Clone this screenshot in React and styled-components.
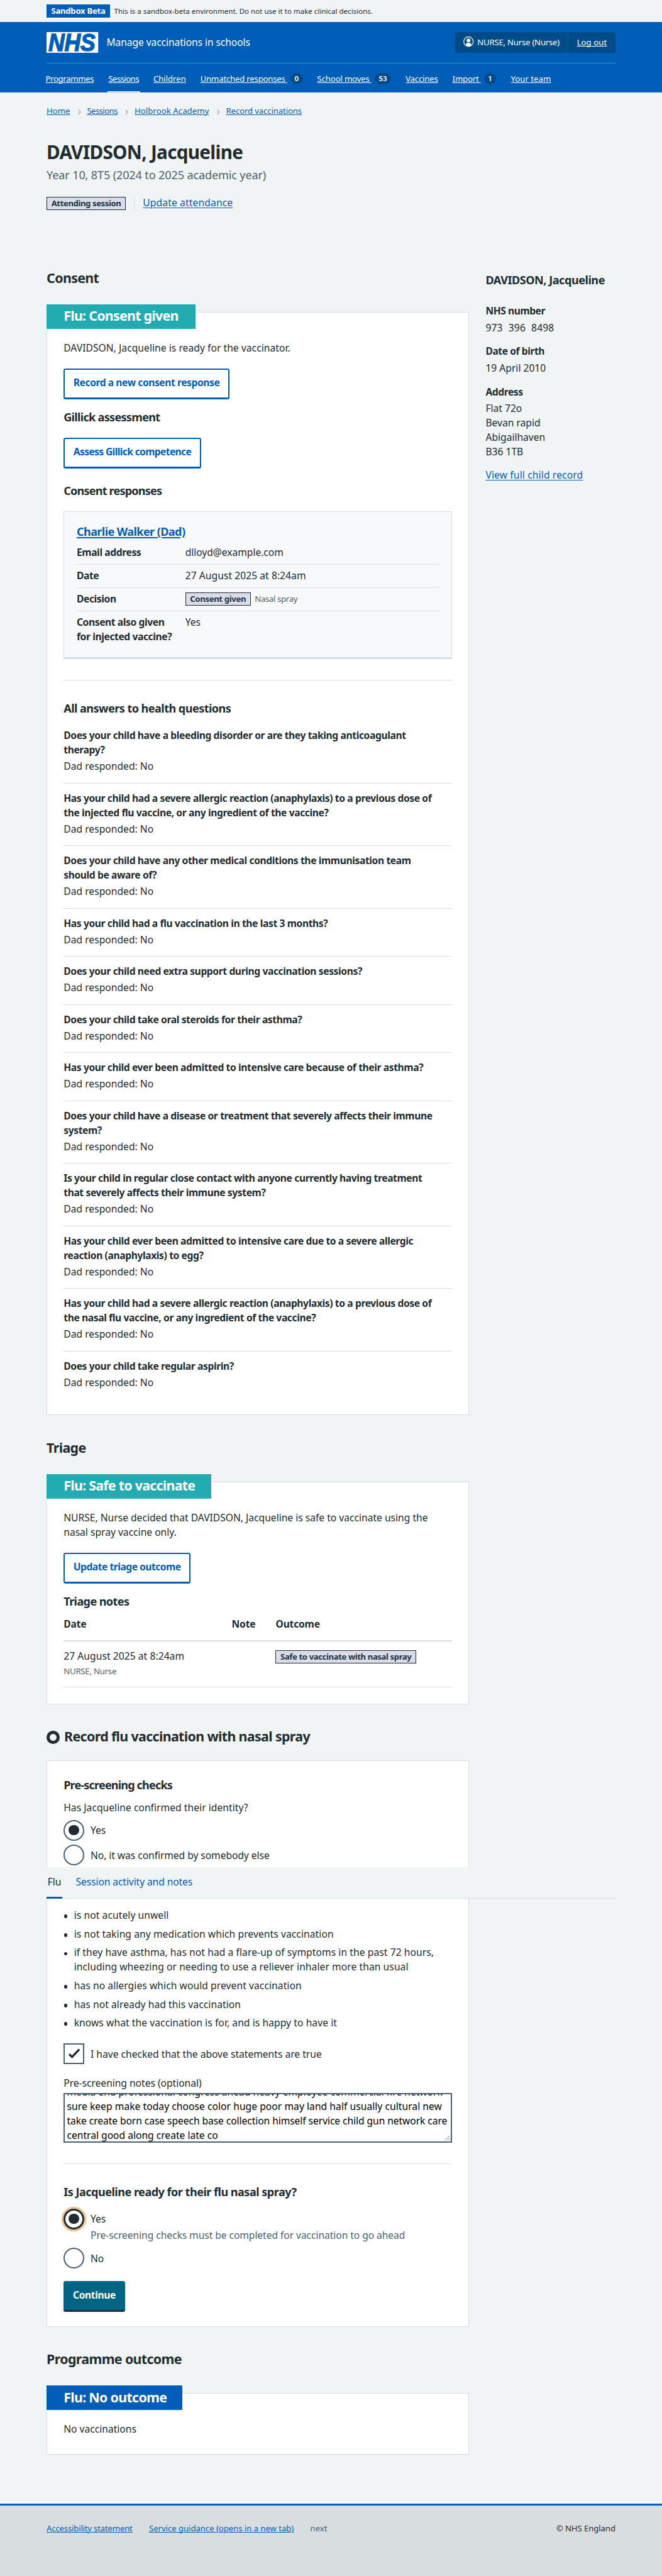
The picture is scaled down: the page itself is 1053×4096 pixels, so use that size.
import React from "react";
import styled, { createGlobalStyle, css } from "styled-components";

const C = {
  text: "#212b32",
  grey: "#4c6272",
  blue: "#005eb8",
  deep: "#004b88",
  rule: "#d8dde0",
  page: "#f0f4f5",
  teal: "#22acb1",
};

/* 1rem is ten design pixels */
const Global = createGlobalStyle`
  html { font-size: 8.2257px; background: ${C.page}; }
  body { margin: 0; color: ${C.text}; font-family: "Noto Sans", "Open Sans", sans-serif; font-size: 1.9rem; line-height: 2.8rem; }
  *, *::before, *::after { box-sizing: border-box; }
  h1, h2, h3, p, ul, dl, dt, dd { margin: 0; padding: 0; }
`;

const mt = css`margin-top: ${(p) => (p.$mt || 0) / 10}rem;`;
const track = css`letter-spacing: ${(p) => (p.$t || 0) / 1000}em;`;
/* bold text is set a little tighter than regular */
const bold = css`font-weight: 700; letter-spacing: ${(p) => ((p.$t || 0) - 12) / 1000}em;`;

const Page = styled.div`height: 4096px; overflow: hidden; white-space: nowrap; display: flex; flex-direction: column;`;
const Wrap = styled.div`width: 110rem; margin: 0 auto;`;

const underline = css`
  text-decoration: underline;
  text-decoration-thickness: 1px;
  text-underline-offset: 0.1em;
`;
const link = css`color: ${C.blue}; ${underline}`;
const Link = styled.a`${link} ${track}`;

/* environment banner */
const Banner = styled(Wrap)`height: 4.2rem; display: flex; align-items: center; gap: 0.8rem; flex: none;`;
const EnvTag = styled.strong`
  background: ${C.blue}; color: #fff; font-size: 1.6rem; line-height: 2.6rem; height: 2.6rem; padding: 0 0.9rem; ${bold}
`;
const EnvText = styled.span`font-size: 1.4rem; ${track}`;

/* header */
const Header = styled.header`background: ${C.blue}; height: 13.7rem; flex: none; color: #fff;`;
const HeaderTop = styled.div`display: flex; align-items: center; height: 8rem;`;
const Logo = styled.svg`width: 10rem; height: 4rem; display: block; overflow: visible;`;
const Service = styled.span`margin-left: 1.6rem; ${track}`;
const Account = styled.div`
  margin-left: auto; height: 4rem; width: 31rem; background: ${C.deep}; border-radius: 0.4rem; display: flex; font-size: 1.6rem; line-height: 2.4rem;
`;
const AccountUser = styled.div`display: flex; align-items: center; padding-left: 1.6rem; gap: 0.7rem; width: 21.9rem; border-right: 1px solid ${C.blue}; ${track}`;
const UserIcon = styled.svg`width: 2rem; height: 2rem; margin-top: -0.2rem;`;
const LogOut = styled.a`flex: 1; text-align: center; color: #fff; line-height: 4.1rem; ${underline} ${track}`;
const Nav = styled.nav`border-top: 1px solid #209dae; height: 5.7rem; display: flex; gap: 2.4rem; padding-top: 0.1rem;`;
const NavItem = styled.div`
  padding: 0.4rem 0.2rem 0; display: flex; align-items: center; font-size: 1.6rem; height: 5.6rem;
  border-bottom: 0.4rem solid ${(p) => (p.$on ? C.rule : "transparent")};
  &:first-child { margin-left: -0.4rem; }
`;
const NavLink = styled.a`color: #fff; white-space: pre; ${underline} ${track}`;
const Count = styled.span`
  background: ${C.deep}; border-radius: 1.2rem; height: 2.2rem; min-width: 2.4rem; padding: 0 0.8rem; margin-left: 0.6rem;
  font-size: 1.4rem; font-weight: 600; line-height: 2.2rem; text-align: center;
`;

/* page heading */
const Crumbs = styled.nav`display: flex; align-items: center; font-size: 1.6rem; line-height: 2.4rem; margin-top: 2.38rem;`;
const Chevron = styled.svg`width: 0.6rem; height: 1rem; margin: 0.4rem 1.2rem 0 1.5rem;`;
const H1 = styled.h1`font-size: 3.6rem; line-height: 4.4rem; margin-top: 4.6rem; ${bold}`;
const Caption = styled.p`font-size: 2.2rem; line-height: 3rem; color: ${C.grey}; margin-top: 0.67rem; ${track}`;
const Status = styled.div`display: flex; height: 2.6rem; margin-top: 2.65rem; align-items: center;`;
const StatusLink = styled.div`border-left: 1px solid ${C.rule}; height: 2.6rem; line-height: 2.2rem; margin-left: 1.6rem; padding-left: 1.6rem;`;
const Tag = styled.strong`
  display: inline-block; height: 2.6rem; line-height: 2.4rem; border: 1px solid ${C.text}; background: #dbdce9; color: #1c3543;
  font-size: 1.6rem; padding: 0 0.8rem; ${bold}
`;

/* columns */
const Columns = styled.div`display: grid; grid-template-columns: 81.7rem 1fr; column-gap: 3.2rem; margin-top: 11.59rem;`;
const Main = styled.main`display: flex; flex-direction: column;`;
const H2 = styled.h2`font-size: 2.6rem; line-height: 3.2rem; ${mt} ${bold}`;
const H3 = styled.h3`font-size: 2.2rem; line-height: 2.8rem; ${mt} ${bold}`;
const P = styled.p`${mt} ${track}`;
const Line = styled.span`display: block; ${track}`;
const BoldLine = styled.span`display: block; ${bold}`;

const Card = styled.section`
  background: #fff; border: 1px solid ${C.rule}; padding: 0 calc(3.3rem - 1px); height: ${(p) => p.$h / 10}rem;
  display: flex; flex-direction: column; align-items: stretch; ${mt}
`;
const Band = styled.h2`
  align-self: flex-start; background: ${(p) => p.$bg || C.teal}; color: #fff; font-size: 2.6rem; line-height: 3.2rem; height: 4.8rem;
  width: ${(p) => p.$w / 10}rem; margin: -1.6rem 0 0 -3.3rem; padding: 0.69rem 0 0 3.3rem; flex: none; ${bold}
`;
const Button = styled.button`
  align-self: flex-start; font: inherit; height: 6rem; padding: 0.1rem 1.65rem 0.4rem; line-height: 4.6rem; flex: none;
  border: 2px solid ${C.blue}; border-bottom-width: 3px; border-radius: 0.4rem; background: #fff; color: ${C.blue}; ${mt} ${bold}
  ${(p) => p.$primary && css`background: #006584; color: #fff; border: 0; border-bottom: 3px solid ${C.text}; padding: 0.4rem 1.8rem;`}
`;
const Rule = styled.hr`border: 0; border-top: 1px solid ${C.rule}; width: 100%; margin: 4rem 0 0; height: 0; flex: none;`;

const Inner = styled.section`
  background: #f8f9fb; border: 1px solid ${C.rule}; border-bottom-width: 3px; height: 28.6rem; padding: 2.45rem 2.4rem 0; margin-top: 2.55rem; flex: none;
`;
const NameLink = styled.a`${link} text-decoration-thickness: 2px;`;
const Summary = styled.dl`margin-top: 0.55rem;`;
const SummaryRow = styled.div`
  display: grid; grid-template-columns: 21rem 1fr; padding: 0.66rem 0 0.9rem; min-height: 4.5rem;
  border-bottom: 1px solid ${C.rule};
  &:last-child { border: 0; }
`;
const Key = styled.dt`${bold}`;
const Value = styled.dd`display: flex; align-items: center; height: 2.8rem; gap: 0.8rem; ${track}`;
const Small = styled.span`font-size: 1.6rem; line-height: 2.4rem; color: ${C.grey}; ${track}`;

const Answers = styled.dl`margin-top: 0.95rem;`;
const Answer = styled.div`
  padding: 1.46rem 0 1.74rem; border-bottom: 0.1rem solid ${C.rule}; height: ${(p) => (p.$lines === 2 ? 12.1 : 9.3)}rem;
  &:last-child { border: 0; }
`;
const Reply = styled.dd`&& { margin-top: 0.4rem; } ${track}`;

const Table = styled.div`margin-top: 1.61rem; flex: none;`;
const TableRow = styled.div`display: grid; grid-template-columns: 32.5rem 8.5rem 1fr;`;
const HeadRow = styled(TableRow)`height: 4.75rem; border-bottom: 2px solid ${C.rule};`;
const BodyRow = styled(TableRow)`padding-top: 1.46rem; height: 8.9rem; border-bottom: 1px solid ${C.rule};`;
const TagCell = styled.div`padding-top: 0.2rem; display: flex; align-items: flex-start;`;
const By = styled(Small)`display: block; margin-top: 0.32rem;`;

/* forms */
const Record = styled.div`position: relative; ${mt}`;
const RecordHead = styled.div`display: flex; gap: 0.8rem; height: 3.2rem; align-items: center;`;
const Ring = styled.span`width: 2.6rem; height: 2.6rem; border: 0.65rem solid ${C.text}; border-radius: 50%; margin-top: 0.3rem;`;
const TabBar = styled.nav`
  position: absolute; left: 0; top: 26.86rem; width: 110rem; height: 6rem; background: ${C.page}; box-shadow: inset 0 -1px ${C.rule};
  display: flex; gap: 2.4rem; z-index: 1;
`;
const Tab = styled.a`
  height: 6rem; padding: 1.46rem 0.2rem 0; ${track}
  color: ${(p) => (p.$on ? C.text : C.blue)};
  border-bottom: 0.4rem solid ${(p) => (p.$on ? C.blue : "transparent")};
`;
const Choice = styled.label`display: flex; gap: 1.2rem; height: 4rem; flex: none; ${mt}`;
const ChoiceText = styled.span`padding-top: 0.66rem; ${track}`;
const Radio = styled.span`
  width: 4rem; height: 4rem; border: ${(p) => (p.$focus ? "0.4rem" : "2px")} solid ${(p) => (p.$focus ? C.text : C.grey)}; border-radius: 50%; background: #fff;
  display: grid; place-items: center;
  ${(p) => p.$focus && css`box-shadow: 0 0 0 0.4rem #ebc693;`}
  &::after { content: ""; width: 2rem; height: 2rem; border-radius: 50%; background: ${(p) => (p.$checked ? C.text : "transparent")}; }
`;
const Check = styled.span`
  width: 4rem; height: 4rem; border: 2px solid ${C.grey}; display: flex;
  svg { width: 100%; height: 100%; display: block; }
`;
const Hint = styled.p`&& { margin: -0.14rem 0 0 5.2rem; } color: ${C.grey}; ${track}`;
const Bullets = styled.ul`&& { margin-top: 8.26rem; padding-left: 2rem; } display: flex; flex-direction: column; gap: 0.8rem; list-style: none;`;
const Bullet = styled.li`
  display: flex; flex-direction: column;
  &::before { content: ""; width: 0.7rem; height: 0.7rem; border-radius: 50%; background: ${C.text}; margin: 1.25rem 0 -1.95rem -1.95rem; }
`;
const Notes = styled.div`
  height: 9.6rem; margin-top: 0.54rem; border: 2px solid ${C.grey}; padding: 0 0.4rem; color: #000; overflow: hidden; position: relative; flex: none; background: #fff;
`;
const NotesText = styled.div`margin-top: -1.84rem;`;
const Grip = styled.svg`position: absolute; right: 1px; bottom: 1px; width: 9px; height: 9px;`;

/* sidebar */
const Side = styled.aside`padding-top: 0.56rem;`;
const SideList = styled.dl`&& { margin-top: 3.21rem; }`;
const SideKey = styled.dt`&&:not(:first-child) { margin-top: 1.8rem; } ${bold}`;
const SideValue = styled.dd`&& { margin-top: 0.4rem; } ${track}`;
const Digits = styled.span`display: flex; gap: 1.1rem; letter-spacing: 0.01em;`;

/* footer */
const Footer = styled.footer`background: ${C.rule}; border-top: 0.4rem solid ${C.blue}; margin-top: 9.6rem; flex: 1; padding-top: 3.18rem;`;
const FooterRow = styled(Wrap)`display: flex; gap: 3.2rem; font-size: 1.6rem; line-height: 2.4rem;`;
const Copy = styled.span`margin-left: auto; ${track}`;

const NAV = [
  ["Programmes", -24],
  ["Sessions", -43, null, true],
  ["Children", -2],
  ["Unmatched responses ", -15, "0"],
  ["School moves ", -11, "53"],
  ["Vaccines", -14],
  ["Import ", -13, "1"],
  ["Your team", 1],
];

const QUESTIONS = [
  ["Does your child have a bleeding disorder or are they taking anticoagulant", "therapy?"],
  ["Has your child had a severe allergic reaction (anaphylaxis) to a previous dose of", "the injected flu vaccine, or any ingredient of the vaccine?"],
  ["Does your child have any other medical conditions the immunisation team", "should be aware of?"],
  ["Has your child had a flu vaccination in the last 3 months?"],
  ["Does your child need extra support during vaccination sessions?"],
  ["Does your child take oral steroids for their asthma?"],
  ["Has your child ever been admitted to intensive care because of their asthma?"],
  ["Does your child have a disease or treatment that severely affects their immune", "system?"],
  ["Is your child in regular close contact with anyone currently having treatment", "that severely affects their immune system?"],
  ["Has your child ever been admitted to intensive care due to a severe allergic", "reaction (anaphylaxis) to egg?"],
  ["Has your child had a severe allergic reaction (anaphylaxis) to a previous dose of", "the nasal flu vaccine, or any ingredient of the vaccine?"],
  ["Does your child take regular aspirin?"],
];

const STATEMENTS = [
  ["is not acutely unwell"],
  ["is not taking any medication which prevents vaccination"],
  ["if they have asthma, has not had a flare-up of symptoms in the past 72 hours,", "including wheezing or needing to use a reliever inhaler more than usual"],
  ["has no allergies which would prevent vaccination"],
  ["has not already had this vaccination"],
  ["knows what the vaccination is for, and is happy to have it"],
];

const Crumb = ({ children, t, last }) => (
  <>
    <Link $t={t}>{children}</Link>
    {!last && (
      <Chevron viewBox="0 0 6 10" fill="none" stroke="#8a99a5" strokeWidth="1.3">
        <path d="M1 0.6 4.8 5 1 9.4" />
      </Chevron>
    )}
  </>
);

export default function App() {
  return (
    <Page>
      <Global />
      <Banner>
        <EnvTag $t={-9.5}>Sandbox Beta</EnvTag>
        <EnvText $t={2}>This is a sandbox-beta environment. Do not use it to make clinical decisions.</EnvText>
      </Banner>

      <Header>
        <Wrap>
          <HeaderTop>
            <Logo viewBox="0 0 100 40">
              <rect width="100" height="40" fill="#fff" />
              <text x="3.5" y="36.4" fontFamily="Liberation Sans, Arial, sans-serif" fontWeight="700" fontStyle="italic" fontSize="47.5" textLength="91" lengthAdjust="spacingAndGlyphs" fill={C.blue} stroke={C.blue} strokeWidth="1.8">NHS</text>
            </Logo>
            <Service $t={-5.4}>Manage vaccinations in schools</Service>
            <Account>
              <AccountUser $t={-16.8}>
                <UserIcon viewBox="0 0 20 20">
                  <circle cx="10" cy="10" r="9.2" fill="none" stroke="#fff" strokeWidth="1.5" />
                  <circle cx="10" cy="7.6" r="3.7" fill="#fff" />
                  <path d="M4.8 17.4v-1.6a3.2 3.2 0 0 1 3.2-3.2h4a3.2 3.2 0 0 1 3.2 3.2v1.6Q10 20.6 4.8 17.4Z" fill="#fff" />
                </UserIcon>
                NURSE, Nurse (Nurse)
              </AccountUser>
              <LogOut $t={5.3}>Log out</LogOut>
            </Account>
          </HeaderTop>
          <Nav>
            {NAV.map(([label, t, count, on]) => (
              <NavItem key={label} $on={on}>
                <NavLink $t={t}>{label}</NavLink>
                {count && <Count>{count}</Count>}
              </NavItem>
            ))}
          </Nav>
        </Wrap>
      </Header>

      <Wrap>
        <Crumbs>
          <Crumb t={-5}>Home</Crumb>
          <Crumb t={-43}>Sessions</Crumb>
          <Crumb t={5}>Holbrook Academy</Crumb>
          <Crumb t={-9} last>Record vaccinations</Crumb>
        </Crumbs>
        <H1 $t={-11.2}>DAVIDSON, Jacqueline</H1>
        <Caption $t={-8}>Year 10, 8T5 (2024 to 2025 academic year)</Caption>
        <Status>
          <Tag $t={-19.8}>Attending session</Tag>
          <StatusLink><Link $t={8.7}>Update attendance</Link></StatusLink>
        </Status>

        <Columns>
          <Main>
            <H2 $t={-18}>Consent</H2>
            <Card $mt={49.1} $h={2132.5}>
              <Band $w={288} $t={-22}>Flu: Consent given</Band>
              <P $mt={22.6} $t={3}>DAVIDSON, Jacqueline is ready for the vaccinator.</P>
              <Button $mt={25.4} $t={-15}>Record a new consent response</Button>
              <H3 $mt={20.5} $t={-26.9}>Gillick assessment</H3>
              <Button $mt={25.5} $t={-28}>Assess Gillick competence</Button>
              <H3 $mt={28.5} $t={-32.9}>Consent responses</H3>
              <Inner>
                <H3 $t={-21}><NameLink>Charlie Walker (Dad)</NameLink></H3>
                <Summary>
                  <SummaryRow><Key $t={-13}>Email address</Key><Value $t={-2}>dlloyd@example.com</Value></SummaryRow>
                  <SummaryRow><Key $t={-13}>Date</Key><Value $t={3.6}>27 August 2025 at 8:24am</Value></SummaryRow>
                  <SummaryRow><Key $t={-13}>Decision</Key><Value><Tag $t={-15.7}>Consent given</Tag><Small $t={-25.5}>Nasal spray</Small></Value></SummaryRow>
                  <SummaryRow><Key $t={-13.6}>Consent also given<br />for injected vaccine?</Key><Value>Yes</Value></SummaryRow>
                </Summary>
              </Inner>
              <Rule />
              <H3 $mt={40.5} $t={-18.3}>All answers to health questions</H3>
              <Answers>
                {QUESTIONS.map((q, i) => (
                  <Answer key={i} $lines={q.length}>
                    <dt>{q.map((l) => <BoldLine key={l} $t={-12.5}>{l}</BoldLine>)}</dt>
                    <Reply $t={1.8}>Dad responded: No</Reply>
                  </Answer>
                ))}
              </Answers>
            </Card>

            <H2 $mt={47} $t={-18}>Triage</H2>
            <Card $mt={49.5} $h={431}>
              <Band $w={319} $t={-22}>Flu: Safe to vaccinate</Band>
              <P $mt={22.6}>NURSE, Nurse decided that DAVIDSON, Jacqueline is safe to vaccinate using the<br />nasal spray vaccine only.</P>
              <Button $mt={25.9} $t={-19}>Update triage outcome</Button>
              <H3 $mt={20} $t={-22}>Triage notes</H3>
              <Table>
                <HeadRow><BoldLine>Date</BoldLine><BoldLine>Note</BoldLine><BoldLine>Outcome</BoldLine></HeadRow>
                <BodyRow>
                  <div><Line $t={3.6}>27 August 2025 at 8:24am</Line><By $t={-17}>NURSE, Nurse</By></div>
                  <span />
                  <TagCell><Tag $t={-18.9}>Safe to vaccinate with nasal spray</Tag></TagCell>
                </BodyRow>
              </Table>
            </Card>

            <Record $mt={46.4}>
              <RecordHead>
                <Ring />
                <H2 $t={-18}>Record flu vaccination with nasal spray</H2>
              </RecordHead>
              <TabBar>
                <Tab $on>Flu</Tab>
                <Tab $t={-6}>Session activity and notes</Tab>
              </TabBar>
              <Card $mt={29.6} $h={1095}>
                <H3 $mt={32.5} $t={-34.9}>Pre-screening checks</H3>
                <P $mt={16.1} $t={2.9}>Has Jacqueline confirmed their identity?</P>
                <Choice $mt={9.4}><Radio $checked /><ChoiceText>Yes</ChoiceText></Choice>
                <Choice $mt={8}><Radio /><ChoiceText $t={-3.5}>No, it was confirmed by somebody else</ChoiceText></Choice>
                <Bullets>
                  {STATEMENTS.map((s) => (
                    <Bullet key={s[0]}>{s.map((l) => <Line key={l} $t={5}>{l}</Line>)}</Bullet>
                  ))}
                </Bullets>
                <Choice $mt={25.4}>
                  <Check>
                    <svg viewBox="2.4 2.4 35.2 35.2"><path d="M11 21 16.6 26.4 30.6 11.8" fill="none" stroke={C.text} strokeWidth="4" /></svg>
                  </Check>
                  <ChoiceText>I have checked that the above statements are true</ChoiceText>
                </Choice>
                <P $mt={22.6} $t={-1.6}>Pre-screening notes (optional)</P>
                <Notes>
                  <NotesText>
                    <Line>media end professional congress ahead heavy employee commercial fire network</Line>
                    <Line $t={3.2}>sure keep make today choose color huge poor may land half usually cultural new</Line>
                    <Line $t={-4.4}>take create born case speech base collection himself service child gun network care</Line>
                    <Line>central good along create late co</Line>
                  </NotesText>
                  <Grip viewBox="0 0 9 9" stroke="#777" strokeWidth="1"><path d="M1 8.5 8.5 1M5 8.5 8.5 5" /></Grip>
                </Notes>
                <Rule />
                <H3 $mt={40.5} $t={-16.7}>Is Jacqueline ready for their flu nasal spray?</H3>
                <Choice $mt={17.5}><Radio $checked $focus /><ChoiceText>Yes</ChoiceText></Choice>
                <Hint $t={-3.9}>Pre-screening checks must be completed for vaccination to go ahead</Hint>
                <Choice $mt={9.4}><Radio /><ChoiceText>No</ChoiceText></Choice>
                <Button $primary $mt={24} $t={-12.6}>Continue</Button>
              </Card>
            </Record>

            <H2 $mt={46.9} $t={-18}>Programme outcome</H2>
            <Card $mt={49.1} $h={118.5}>
              <Band $w={263} $t={-20} $bg={C.blue}>Flu: No outcome</Band>
              <P $mt={22.6}>No vaccinations</P>
            </Card>
          </Main>

          <Side>
            <H3 $t={-14}>DAVIDSON, Jacqueline</H3>
            <SideList>
              <SideKey $t={-16}>NHS number</SideKey>
              <SideValue><Digits><span>973</span><span>396</span><span>8498</span></Digits></SideValue>
              <SideKey $t={-16}>Date of birth</SideKey>
              <SideValue>19 April 2010</SideValue>
              <SideKey $t={-16}>Address</SideKey>
              <SideValue>Flat 72o<br />Bevan rapid<br />Abigailhaven<br />B36 1TB</SideValue>
            </SideList>
            <P $mt={17}><Link $t={8.9}>View full child record</Link></P>
          </Side>
        </Columns>
      </Wrap>

      <Footer>
        <FooterRow>
          <Link $t={-14}>Accessibility statement</Link>
          <Link $t={-3.5}>Service guidance (opens in a new tab)</Link>
          <Small>next</Small>
          <Copy $t={-6.7}>© NHS England</Copy>
        </FooterRow>
      </Footer>
    </Page>
  );
}
